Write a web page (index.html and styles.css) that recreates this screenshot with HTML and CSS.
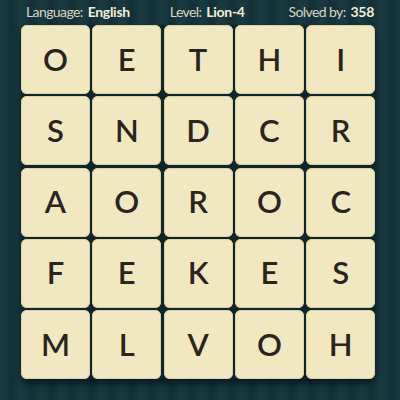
FILE: index.html
```html
<!DOCTYPE html>
<html>
<head>
<meta charset="utf-8">
<link rel="stylesheet" href="styles.css">
</head>
<body>
<div class="page">
  <div class="header">
    <span class="item lang">Language: <b>English</b></span>
    <span class="item level">Level: <b>Lion-4</b></span>
    <span class="item solved">Solved by: <b>358</b></span>
  </div>
  <div class="board">
    <div class="tile">O</div><div class="tile">E</div><div class="tile">T</div><div class="tile">H</div><div class="tile">I</div>
    <div class="tile">S</div><div class="tile">N</div><div class="tile">D</div><div class="tile">C</div><div class="tile">R</div>
    <div class="tile">A</div><div class="tile">O</div><div class="tile">R</div><div class="tile">O</div><div class="tile">C</div>
    <div class="tile">F</div><div class="tile">E</div><div class="tile">K</div><div class="tile">E</div><div class="tile">S</div>
    <div class="tile">M</div><div class="tile">L</div><div class="tile">V</div><div class="tile">O</div><div class="tile">H</div>
  </div>
</div>
</body>
</html>
```

FILE: styles.css
```css
html, body {
  margin: 0;
  padding: 0;
}
body {
  width: 400px;
  height: 400px;
  overflow: hidden;
  background-color: #173439;
  background-image: repeating-linear-gradient(90deg, #183a40 0px, #173840 6px, #13303a 10px, #163439 16px, #183a40 20px);
  font-family: Lato, "Noto Sans", sans-serif;
}
.page {
  display: flex;
  flex-direction: column;
  padding: 0 0 0 21px;
}
.header {
  display: flex;
  width: 348px;
  padding: 4px 0 0 5px;
  height: 21px;
  color: #d9d6c0;
  font-size: 14px;
  line-height: 16px;
  letter-spacing: -0.6px;
}
.header b {
  font-weight: 700;
  color: #f3efd8;
  margin-left: 2px;
  letter-spacing: -0.3px;
}
.level {
  margin-left: 40px;
}
.solved {
  margin-left: auto;
}
.board {
  display: grid;
  grid-template-columns: repeat(5, 69px);
  grid-template-rows: repeat(5, 69px);
  gap: 2.3px;
  width: 354px;
  background: #0e262b;
  border-radius: 8px;
  box-shadow: 0 5px 6px rgba(5, 20, 24, 0.75);
}
.tile {
  background: #f1e8c2;
  border-radius: 6px;
  display: flex;
  align-items: center;
  justify-content: center;
  color: #2a241d;
  font-size: 31px;
  font-weight: 600;
  padding-bottom: 2px;
  box-sizing: border-box;
  box-shadow: inset 0 0 0 1px #ddd1a3;
}
```
